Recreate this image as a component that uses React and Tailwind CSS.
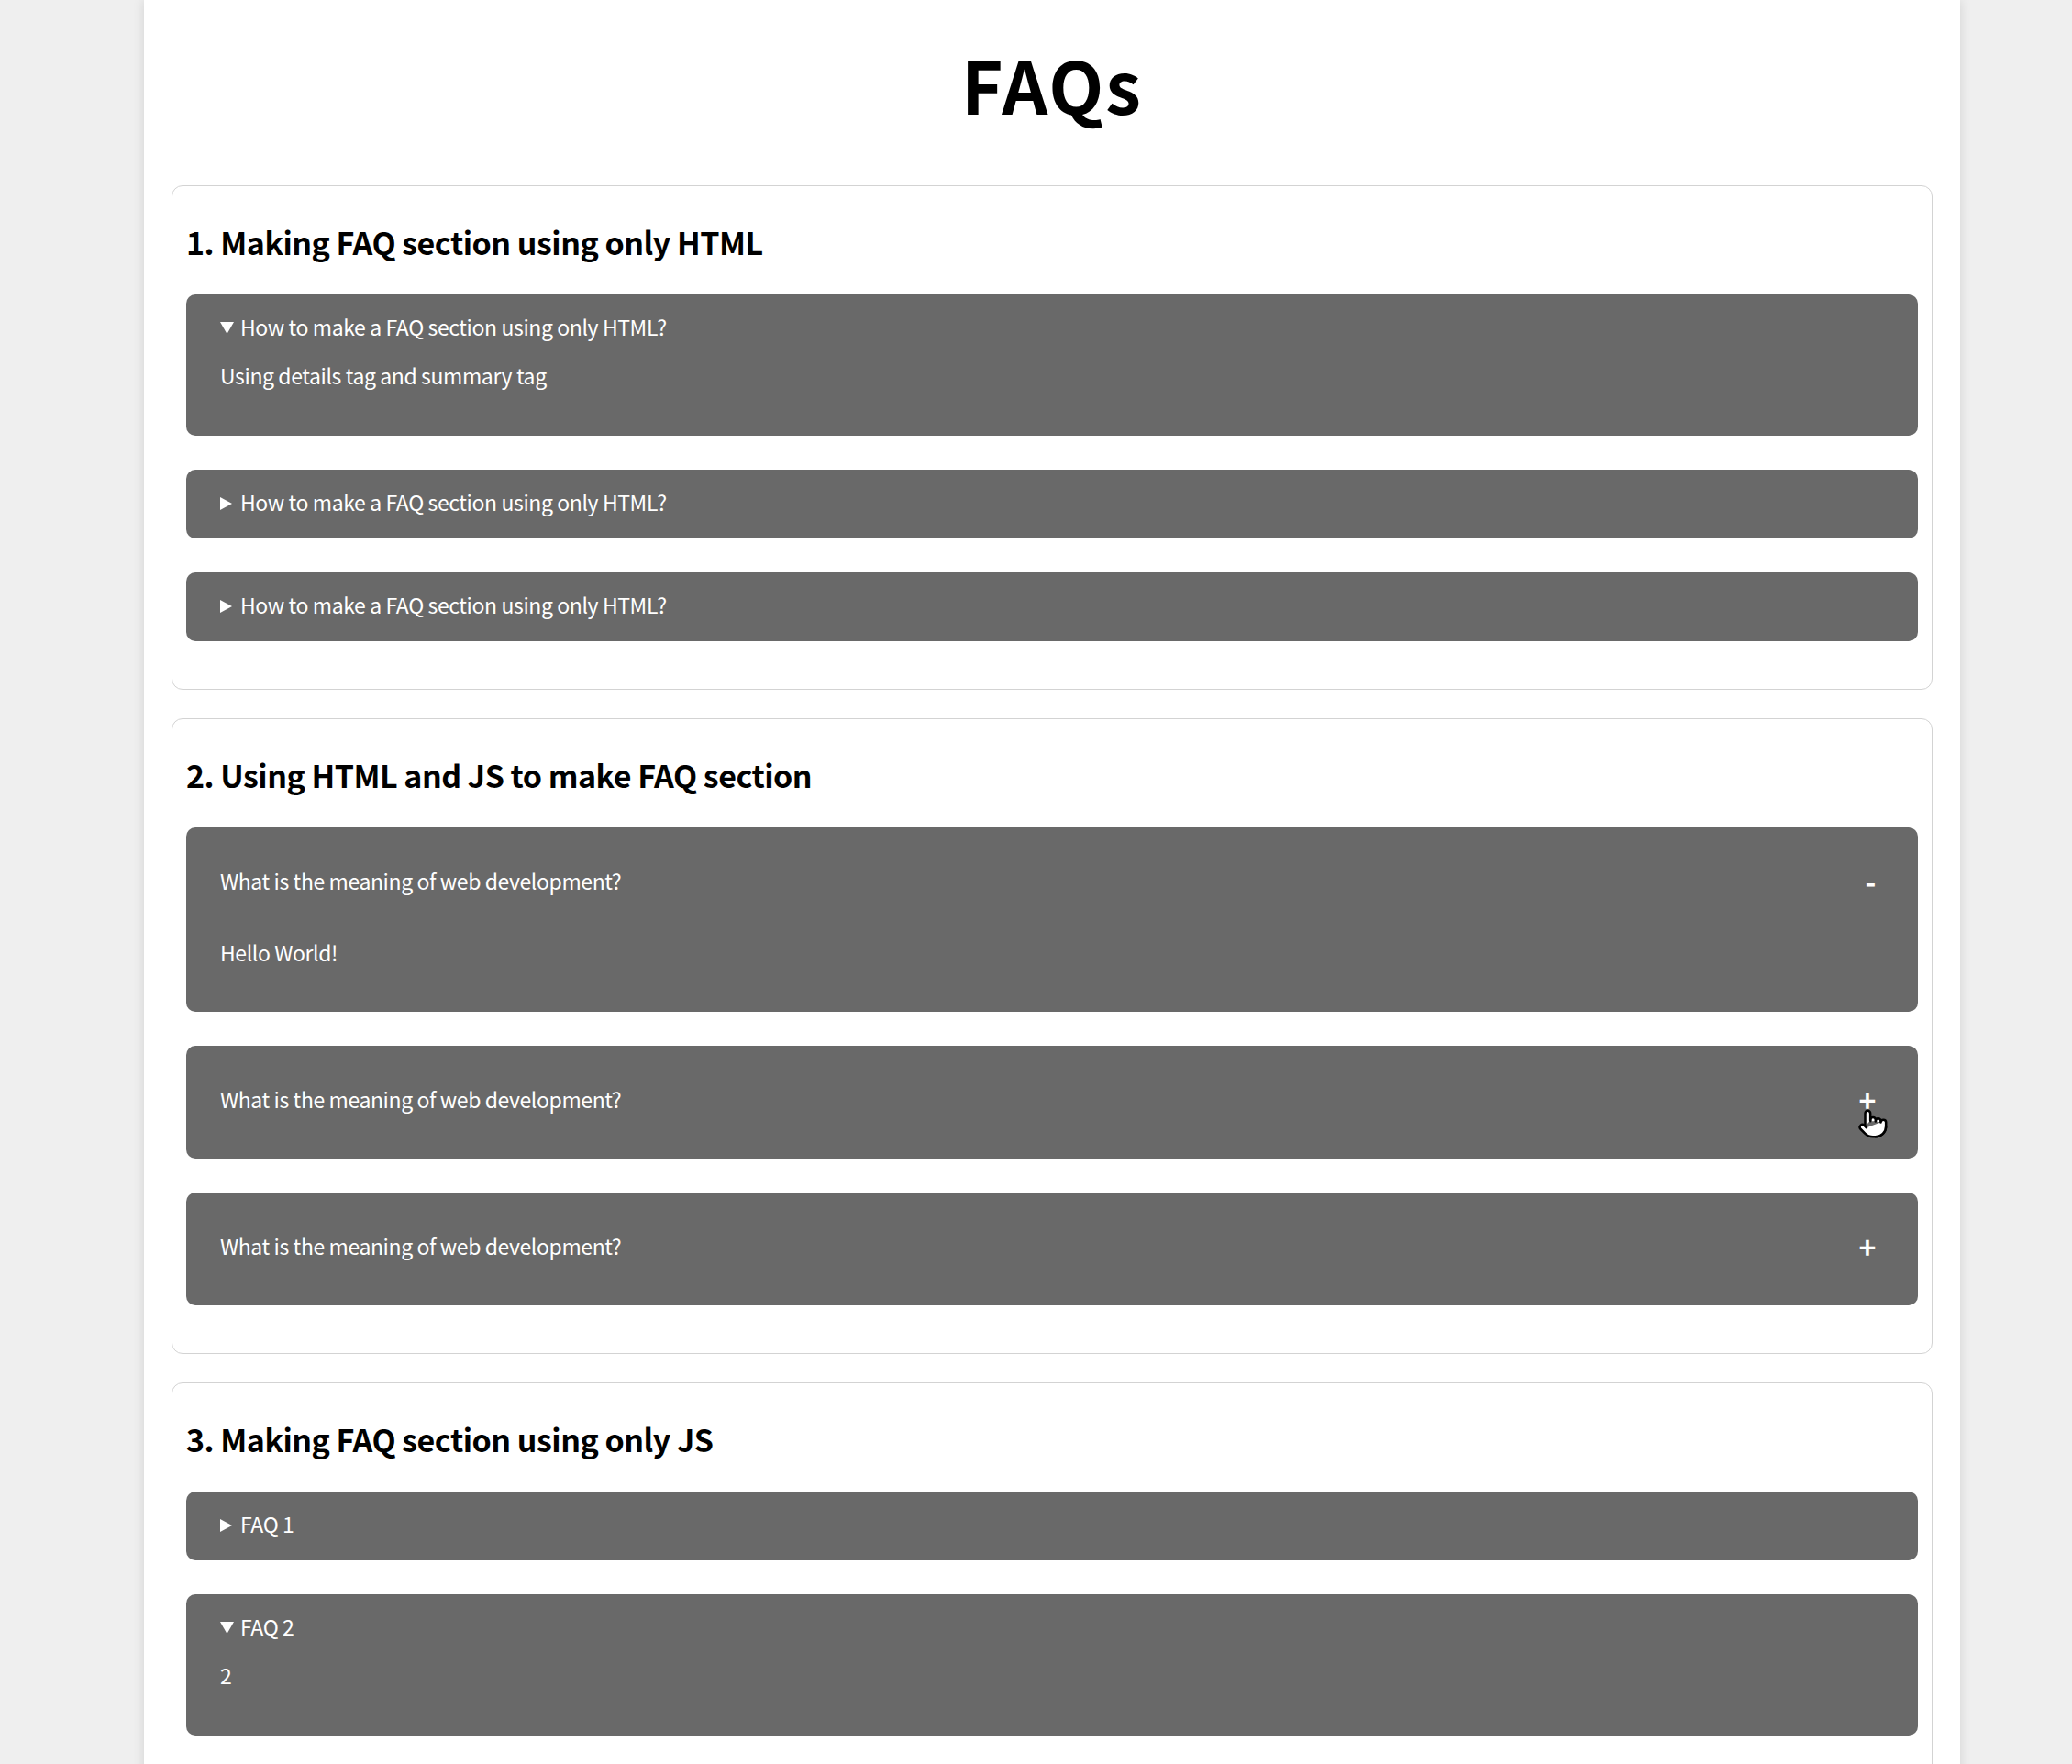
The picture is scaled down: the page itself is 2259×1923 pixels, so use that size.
import React, { useState } from 'react';
import { Pointer } from 'lucide-react';

const htmlFaqs = [
  { q: 'How to make a FAQ section using only HTML?', a: 'Using details tag and summary tag', open: true },
  { q: 'How to make a FAQ section using only HTML?', a: 'Using details tag and summary tag', open: false },
  { q: 'How to make a FAQ section using only HTML?', a: 'Using details tag and summary tag', open: false },
];

const jsHtmlFaqs = [
  { q: 'What is the meaning of web development?', a: 'Hello World!', open: true },
  { q: 'What is the meaning of web development?', a: 'Hello World!', open: false, hovered: true },
  { q: 'What is the meaning of web development?', a: 'Hello World!', open: false },
];

const jsFaqs = [
  { q: 'FAQ 1', a: '1', open: false },
  { q: 'FAQ 2', a: '2', open: true },
];

// summary marker
const Arrow = ({ open }) => (
  <span className="flex w-[22px] shrink-0 pt-[10px]">
    {open ? (
      <svg width="15" height="13" viewBox="0 0 15 13" className="fill-white">
        <polygon points="0,0 15,0 7.5,13" />
      </svg>
    ) : (
      <svg width="13" height="14" viewBox="0 0 13 14" className="fill-white">
        <polygon points="0,0 13,7 0,14" />
      </svg>
    )}
  </span>
);

// details/summary style item
const DetailsItem = ({ q, a, defaultOpen }) => {
  const [open, setOpen] = useState(defaultOpen);
  return (
    <div className="mb-[37px] rounded-[10px] bg-[#696969] px-[37px] pt-[20px] pb-[25px] text-[23px] leading-[30px] tracking-[-0.4px] text-white">
      <div onClick={() => setOpen(!open)} className="flex cursor-pointer items-start">
        <Arrow open={open} />
        <span>{q}</span>
      </div>
      {open && <p className="mt-[23px] mb-[26px]">{a}</p>}
    </div>
  );
};

// html + js accordion item
const ToggleItem = ({ q, a, defaultOpen, hovered }) => {
  const [open, setOpen] = useState(defaultOpen);
  return (
    <div className="relative mb-[37px] rounded-[10px] bg-[#696969] pt-[43px] pb-[50px] pl-[37px] pr-[46px] text-[23px] leading-[30px] tracking-[-0.4px] text-white">
      <div onClick={() => setOpen(!open)} className="flex cursor-pointer items-center justify-between">
        <span>{q}</span>
        <span className="text-[32px] font-bold">{open ? '-' : '+'}</span>
      </div>
      {open && <p className="mt-[48px]">{a}</p>}
      {hovered && (
        <Pointer
          size={34}
          fill="white"
          color="black"
          strokeWidth={1.8}
          className="pointer-events-none absolute top-[68px] right-[32px]"
        />
      )}
    </div>
  );
};

const Section = ({ title, children }) => (
  <section className="mb-[31px] rounded-[12px] border border-[#d3d3d3] px-[15px] pt-[39px] pb-[15px]">
    <h2 className="mb-[36px] text-[34px] leading-[43px] font-bold tracking-[-0.5px] text-black">{title}</h2>
    {children}
  </section>
);

export default function App() {
  return (
    <div className="min-h-screen bg-[#efefef] font-['Noto_Sans_CJK_KR',sans-serif]">
      <div className="ml-[157px] min-h-screen w-[1980px] bg-white px-[30px] pt-[45px] pb-[20px] shadow-[0_0_12px_rgba(0,0,0,0.12)]">
        <h1 className="mb-[65px] text-center text-[78px] leading-[92px] font-bold tracking-[2px] text-black">FAQs</h1>

        <Section title="1. Making FAQ section using only HTML">
          {htmlFaqs.map((f, i) => (
            <DetailsItem key={i} q={f.q} a={f.a} defaultOpen={f.open} />
          ))}
        </Section>

        <Section title="2. Using HTML and JS to make FAQ section">
          {jsHtmlFaqs.map((f, i) => (
            <ToggleItem key={i} q={f.q} a={f.a} defaultOpen={f.open} hovered={f.hovered} />
          ))}
        </Section>

        <Section title="3. Making FAQ section using only JS">
          {jsFaqs.map((f, i) => (
            <DetailsItem key={i} q={f.q} a={f.a} defaultOpen={f.open} />
          ))}
        </Section>
      </div>
    </div>
  );
}
